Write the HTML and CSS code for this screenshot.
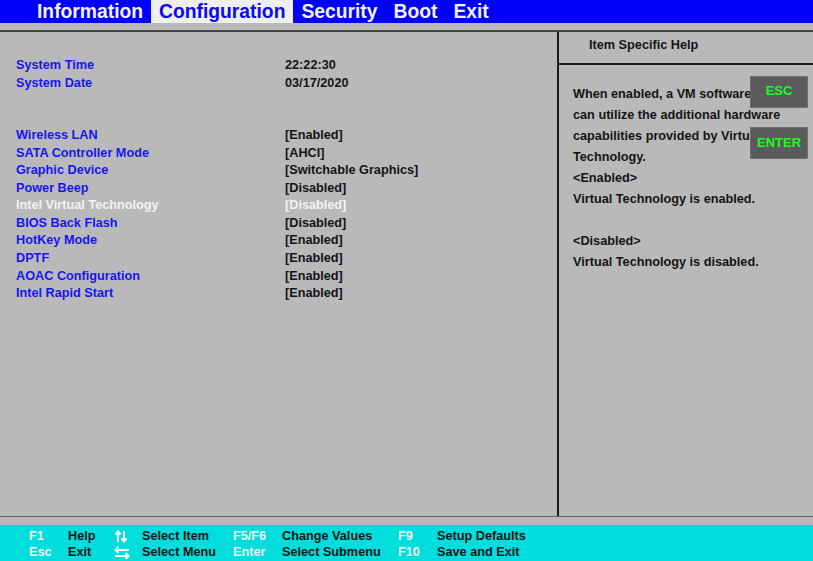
FILE: index.html
```html
<!DOCTYPE html>
<html>
<head>
<meta charset="utf-8">
<link rel="stylesheet" href="styles.css">
</head>
<body>
<nav class="menubar">
  <span class="tab">Information</span>
  <span class="tab active">Configuration</span>
  <span class="tab">Security</span>
  <span class="tab">Boot</span>
  <span class="tab">Exit</span>
</nav>
<main class="main">
  <section class="settings">
    <div class="row"><span class="label">System Time</span><span class="value">22:22:30</span></div>
    <div class="row"><span class="label">System Date</span><span class="value">03/17/2020</span></div>
    <div class="row"></div>
    <div class="row"></div>
    <div class="row"><span class="label">Wireless LAN</span><span class="value">[Enabled]</span></div>
    <div class="row"><span class="label">SATA Controller Mode</span><span class="value">[AHCI]</span></div>
    <div class="row"><span class="label">Graphic Device</span><span class="value">[Switchable Graphics]</span></div>
    <div class="row"><span class="label">Power Beep</span><span class="value">[Disabled]</span></div>
    <div class="row selected"><span class="label">Intel Virtual Technology</span><span class="value">[Disabled]</span></div>
    <div class="row"><span class="label">BIOS Back Flash</span><span class="value">[Disabled]</span></div>
    <div class="row"><span class="label">HotKey Mode</span><span class="value">[Enabled]</span></div>
    <div class="row"><span class="label">DPTF</span><span class="value">[Enabled]</span></div>
    <div class="row"><span class="label">AOAC Configuration</span><span class="value">[Enabled]</span></div>
    <div class="row"><span class="label">Intel Rapid Start</span><span class="value">[Enabled]</span></div>
  </section>
  <aside class="help">
    <div class="help-title">Item Specific Help</div>
    <div class="help-body">
      <p>When enabled, a VM software<br>can utilize the additional hardware<br>capabilities provided by Virtual<br>Technology.<br>&lt;Enabled&gt;<br>Virtual Technology is enabled.<br><br>&lt;Disabled&gt;<br>Virtual Technology is disabled.</p>
      <div class="keybtn esc">ESC</div>
      <div class="keybtn enter">ENTER</div>
    </div>
  </aside>
</main>
<footer class="footer">
  <span class="key">F1</span><span class="desc">Help</span>
  <span class="icon"><svg width="14" height="13" viewBox="0 0 14 13"><path d="M4 12V2M1.5 4.5L4 1.5L6.5 4.5M10 1v10M7.5 8.5L10 11.5L12.5 8.5" stroke="#fff" stroke-width="2" fill="none"/></svg></span>
  <span class="desc">Select Item</span>
  <span class="key">F5/F6</span><span class="desc">Change Values</span>
  <span class="key">F9</span><span class="desc">Setup Defaults</span>

  <span class="key">Esc</span><span class="desc">Exit</span>
  <span class="icon"><svg width="16" height="13" viewBox="0 0 16 13"><path d="M1.5 4H15M4.5 1L1.5 4L4.5 7M1 10h13.5M11.5 7l3 3l-3 3" stroke="#fff" stroke-width="2" fill="none"/></svg></span>
  <span class="desc">Select Menu</span>
  <span class="key">Enter</span><span class="desc">Select Submenu</span>
  <span class="key">F10</span><span class="desc">Save and Exit</span>
</footer>
</body>
</html>
```
FILE: styles.css
```css
html, body {
  margin: 0;
  padding: 0;
}
body {
  width: 813px;
  height: 561px;
  overflow: hidden;
  background: #b9b9b9;
  font-family: "Liberation Sans", Arial, sans-serif;
  font-weight: bold;
  font-size: 12.7px;
  color: #141414;
}
.menubar {
  display: flex;
  height: 23px;
  background: #0000f8;
  padding-left: 29px;
  margin-bottom: 7px;
}
.tab {
  font-size: 19.3px;
  line-height: 23px;
  padding: 0 8px;
  color: #f2f2f2;
}
.tab.active {
  background: #efefef;
  color: #0a0aee;
}
.main {
  display: flex;
  height: 484px;
  border-top: 2px solid #444;
  border-bottom: 1px solid #666;
}
.settings {
  width: 541px;
  padding: 25px 0 0 16px;
  border-right: 2px solid #1c1c1c;
}
.row {
  display: flex;
  height: 17.55px;
  line-height: 17.55px;
}
.label {
  width: 269px;
  color: #1616f2;
}
.value {
  color: #141414;
}
.row.selected .label,
.row.selected .value {
  color: #f3f3f3;
}
.help {
  flex: 1;
  display: flex;
  flex-direction: column;
}
.help-title {
  height: 26px;
  padding: 5px 0 0 30px;
  line-height: 17px;
  border-bottom: 2px solid #1c1c1c;
}
.help-body {
  position: relative;
  padding: 19px 0 0 14px;
}
.help-body p {
  margin: 0;
  line-height: 21px;
}
.keybtn {
  position: absolute;
  left: 191px;
  width: 56px;
  height: 30px;
  background: #5b5b5b;
  border: 1px solid #6f6f6f;
  color: #18ff18;
  text-align: center;
  line-height: 28px;
  font-size: 13px;
}
.keybtn.esc {
  top: 11px;
}
.keybtn.enter {
  top: 62px;
  line-height: 30px;
}
.footer {
  margin-top: 8px;
  height: 33px;
  padding: 3px 0 0 29px;
  background: #00dddd;
  display: grid;
  grid-template-columns: 39px 46px 28px 91px 49px 116px 39px auto;
  grid-auto-rows: 16px;
  line-height: 16px;
}
.key {
  color: #f4f4f4;
}
.desc {
  color: #141414;
}
.icon {
  display: flex;
  align-items: center;
}
.icon svg {
  display: block;
}
```
